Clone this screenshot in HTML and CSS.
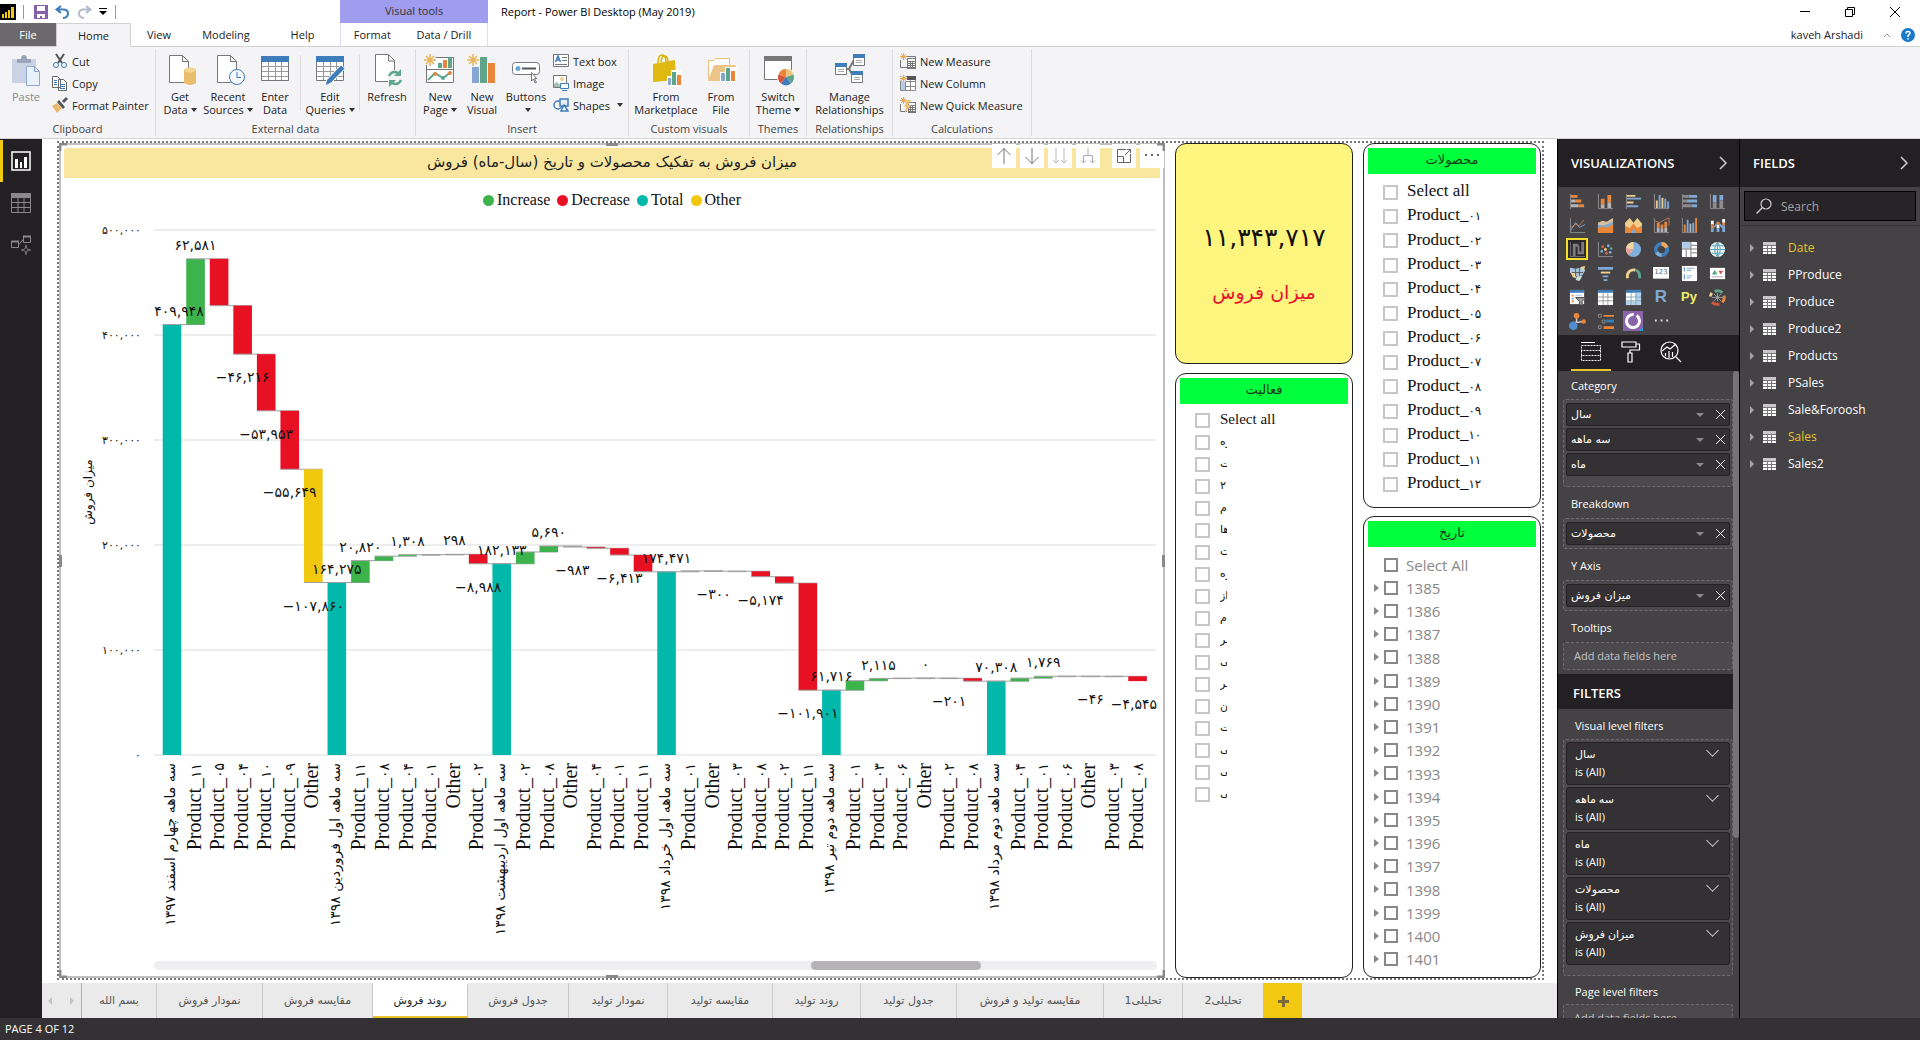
FILE: index.html
```html
<!DOCTYPE html>
<html lang="en">
<head>
<meta charset="utf-8">
<title>Report - Power BI Desktop (May 2019)</title>
<link rel="stylesheet" href="styles.css">
</head>
<body>
<header class="top">
  <div class="titlebar">
    <div class="quick">
      <svg class="logo" width="16" height="16" viewBox="0 0 16 16"><path fill="#000" d="M0 0h16v16H0z"/><path fill="#f2c811" d="M2 10h2v4H2zM5 8h2v6H5zM8 6h2v8H8zM11 3h3v11h-3z"/></svg>
      <i class="bar"></i>
      <button class="q" aria-label="Save"><svg width="14" height="14" viewBox="0 0 14 14"><path fill="#8661a8" d="M0 0h14v14H0z"/><path fill="#fff" d="M3 1h8v5H3zM3 9h8v4H8v-2H6v2H3z"/></svg></button>
      <button class="q" aria-label="Undo"><svg width="15" height="14" viewBox="0 0 15 14"><path fill="none" stroke="#3f7cba" stroke-width="2" d="M6 1 1.500 4.500 6 8M2 4.500h6q5 0 5 4t-5 4.500"/></svg></button>
      <button class="q" aria-label="Redo"><svg width="15" height="14" viewBox="0 0 15 14"><path fill="none" stroke="#b4bccb" stroke-width="2" d="M9 1l4.500 3.500L9 8M13 4.500H7q-5 0-5 4T7 13"/></svg></button>
      <button class="q" aria-label="Customize"><svg width="8" height="8" viewBox="0 0 8 8"><path d="M0 0h8v1H0zM0 3h8L4 7z"/></svg></button>
      <i class="bar"></i>
    </div>
    <div class="vtools">Visual tools</div>
    <div class="apptitle">Report - Power BI Desktop (May 2019)</div>
    <div class="winbtns">
      <button aria-label="Minimize"><svg width="12" height="12" viewBox="0 0 12 12"><path d="M1 5h10v1H1z"/></svg></button>
      <button aria-label="Restore"><svg width="12" height="12" viewBox="0 0 12 12"><path fill="none" stroke="#000" d="M1.500 3.500h7v7h-7zM3.500 3V1.500h7v7H9"/></svg></button>
      <button aria-label="Close"><svg width="12" height="12" viewBox="0 0 12 12"><path fill="none" stroke="#000" d="M1 1l10 10M11 1 1 11"/></svg></button>
    </div>
  </div>
  <nav class="menu">
    <button class="m file">File</button><button class="m home">Home</button><button class="m view">View</button><button class="m modeling">Modeling</button><button class="m help">Help</button>
    <div class="ctx"><button class="m">Format</button><button class="m">Data / Drill</button></div>
    <div class="user"><span>kaveh Arshadi</span>
      <svg width="8" height="6" viewBox="0 0 8 6"><path fill="none" stroke="#999" d="M1 5l3-3 3 3"/></svg>
      <svg width="14" height="14" viewBox="0 0 14 14"><circle cx="7" cy="7" r="7" fill="#1979ca"/><path fill="none" stroke="#fff" stroke-width="1.500" d="M5 5.500q0-2 2-2t2 1.800Q9 6.500 7 7.500V9M7 10v1.500"/></svg>
    </div>
  </nav>
  <div class="ribbon">
    <section class="g g1">
      <div class="tools">
        <button class="big dis"><svg width="32" height="32" viewBox="0 0 32 32"><path fill="#c9d3e4" d="M2 4h24v24H2z"/><path fill="#9aa5bb" d="M7 4h4q0-4 3-4t3 4h4v4H7z"/><path fill="#e9f1fb" stroke="#8fa9d4" d="M16.500 11.500h8l5 5v14h-13zM24.500 11.500v5h5"/></svg><span>Paste</span></button>
        <div class="smalls">
          <button class="sm"><svg width="16" height="16" viewBox="0 0 16 16"><path fill="none" stroke="#555" stroke-width="2" d="M4 1l6 9M12 1 6 10"/><circle cx="4" cy="12" r="2.500" fill="none" stroke="#3f7cba"/><circle cx="12" cy="12" r="2.500" fill="none" stroke="#3f7cba"/></svg>Cut</button>
          <button class="sm"><svg width="16" height="16" viewBox="0 0 16 16"><path fill="#fff" stroke="#666" d="M.5 1.500h5l3 3v8h-8zM6.500 4.500h5l3 3v8h-8z"/><path stroke="#3f7cba" d="M2 5.500h3M2 7.500h3M2 9.500h3M8 9.500h5M8 11.500h5M8 13.500h5"/></svg>Copy</button>
          <button class="sm"><svg width="16" height="16" viewBox="0 0 16 16"><path fill="#e9b96f" d="M0 9l5-3 5 5-5 5z"/><path fill="#555" d="M5 5l2-2 6 7-2 2zM10 4l4-4 2 2-4 4z"/></svg>Format Painter</button>
        </div>
      </div>
      <h2>Clipboard</h2>
    </section>
    <section class="g g2">
      <div class="tools">
        <button class="big w48"><svg width="32" height="32" viewBox="0 0 32 32"><path fill="#fff" stroke="#777" d="M5.500.5h13l6 6v21h-19zM18.500.5v6h6"/><path fill="#e9bd6b" d="M20 15q6-4 12 0v13q-6 4-12 0z"/><ellipse cx="26" cy="15" rx="6" ry="2.500" fill="#f4d490"/></svg><span>Get<br>Data<b class="dd"></b></span></button>
        <button class="big w48"><svg width="32" height="32" viewBox="0 0 32 32"><path fill="#fff" stroke="#777" d="M5.500.5h13l6 6v21h-19zM18.500.5v6h6"/><circle cx="25" cy="22" r="7.500" fill="#f4f8fd" stroke="#3f7cba"/><path fill="none" stroke="#3f7cba" d="M25 17v5.500h4"/></svg><span>Recent<br>Sources<b class="dd"></b></span></button>
        <button class="big w46"><svg width="32" height="32" viewBox="0 0 32 32"><path fill="#fff" stroke="#777" d="M2.500 2.500h27v23h-27z"/><path fill="#3f7cba" d="M2 1h28v6H2z"/><path stroke="#999" d="M3 11.500h26M3 16.500h26M3 21.500h26M9.500 7v18M16.500 7v18M22.500 7v18"/></svg><span>Enter<br>Data</span></button>
        <i class="vs"></i>
        <button class="big w54"><svg width="32" height="32" viewBox="0 0 32 32"><path fill="#fff" stroke="#777" d="M2.500 2.500h27v23h-27z"/><path fill="#3f7cba" d="M2 1h28v6H2z"/><path stroke="#999" d="M3 11.500h26M3 16.500h26M3 21.500h26M9.500 7v18M16.500 7v18M22.500 7v18"/><path fill="#3f7cba" stroke="#fff" d="M11 31l1.500-6L27 10l4 3.500L17 28z"/></svg><span>Edit<br>Queries<b class="dd"></b></span></button>
        <i class="vs"></i>
        <button class="big w50"><svg width="32" height="32" viewBox="0 0 32 32"><path fill="#fff" stroke="#777" d="M4.500-.5h13l6 6v21h-19zM17.500 0v6h6"/><circle cx="24" cy="23" r="8" fill="#f4f4f6"/><path fill="none" stroke="#5ea58c" stroke-width="2.500" d="M18 21q3-6 9-3M30 25q-3 6-9 3"/><path fill="#5ea58c" d="M30 14v7h-7zM18 32v-7h7z"/></svg><span>Refresh</span></button>
      </div>
      <h2>External data</h2>
    </section>
    <section class="g g3">
      <div class="tools">
        <button class="big w48"><svg width="32" height="32" viewBox="0 0 32 32"><path fill="#fff" stroke="#777" d="M2.500 2.500h27v25h-27zM3 14.500h26"/><path fill="#5ea58c" d="M14 8h4v5h-4zM24 2h4v11h-4z"/><path fill="#e8863a" d="M19 5h4v8h-4z"/><path fill="none" stroke="#5ea58c" stroke-width="2" d="M4 25l7-7 8 5 8-6"/><circle cx="11" cy="19" r="2" fill="#e8863a"/><circle cx="19" cy="23" r="2" fill="#5ea58c"/><circle cx="26" cy="18" r="2" fill="#e8863a"/><circle cx="6" cy="5" r="6" fill="#f4f4f6"/><path stroke="#e9b45c" stroke-width="1.500" d="M6-1v12M0 5h12M2 1l8 8M10 1 2 9"/></svg><span>New<br>Page<b class="dd"></b></span></button>
        <button class="big w36"><svg width="32" height="32" viewBox="0 0 32 32"><path fill="#85a7d2" d="M6 12h7v16H6z"/><path fill="#5ea58c" d="M14 2h7v26h-7z"/><path fill="#e8863a" d="M22 8h7v20h-7z"/><circle cx="7" cy="5" r="6" fill="#f4f4f6"/><path stroke="#e9b45c" stroke-width="1.500" d="M7-1v12M1 5h12M3 1l8 8M11 1 3 9"/></svg><span>New<br>Visual</span></button>
        <button class="big w52"><svg width="32" height="32" viewBox="0 0 32 32"><rect x="2.500" y="7.500" width="27" height="12" rx="3" fill="#fff" stroke="#777"/><circle cx="8" cy="13.500" r="2.500" fill="#69a7d6"/><path stroke="#555" stroke-width="2" d="M12 13.500h14"/><path fill="#fff" stroke="#777" d="M21.500 17.500l5 6h-2l2 4-1.500.5-1.500-4-2 2z"/></svg><span>Buttons<br><b class="dd mid"></b></span></button>
        <div class="smalls">
          <button class="sm"><svg width="16" height="16" viewBox="0 0 16 16"><path fill="#fff" stroke="#777" d="M.5 1.500h15v12H.5z"/><path fill="none" stroke="#3f7cba" stroke-width="1.500" d="M2.500 9 5 3l2.500 6M3 7h4"/><path stroke="#777" d="M9 4.500h5M9 7.500h5M2 11.500h12"/></svg>Text box</button>
          <button class="sm"><svg width="16" height="16" viewBox="0 0 16 16"><path fill="#fff" stroke="#777" d="M.5.5h13v12H.5z"/><circle cx="9" cy="4" r="2" fill="#f1cf90"/><path fill="#9fc3b0" d="M1 12V9l3-2 3 3v2z"/><path fill="#fff" stroke="#3f7cba" d="M7.500 8.500h8v5h-8zM9 15.500h5"/></svg>Image</button>
          <button class="sm"><svg width="16" height="16" viewBox="0 0 16 16"><circle cx="5" cy="8" r="4" fill="none" stroke="#3f7cba" stroke-width="1.500"/><path fill="#e6eef8" stroke="#3f7cba" stroke-width="1.500" d="M7 2h8v7H7z"/><path fill="#fff" stroke="#3f7cba" stroke-width="1.500" d="M11 8l4 6H8z"/></svg>Shapes<b class="dd"></b></button>
        </div>
      </div>
      <h2>Insert</h2>
    </section>
    <section class="g g4">
      <div class="tools">
        <button class="big w74"><svg width="32" height="32" viewBox="0 0 32 32"><path fill="none" stroke="#d9b300" stroke-width="1.500" d="M8 8q0-8 4-8t4 8M11 7q1-7 4-6t3 6"/><path fill="#dfb811" d="M3 9l22-4 1 20-23 2z"/><path fill="#fff" d="M17 21h4v-6h10v17H17z"/><path fill="#85a7d2" d="M18 23h3v7h-3z"/><path fill="#5ea58c" d="M22 17h4v13h-4z"/><path fill="#e8863a" d="M27 20h4v10h-4z"/></svg><span>From<br>Marketplace</span></button>
        <button class="big w36"><svg width="32" height="32" viewBox="0 0 32 32"><path fill="#fff" stroke="#e9bd7c" d="M3.500 24V5.500h5l2-2h14V12"/><path fill="#ecc488" d="M3 26 9 10h22l-6 16z"/><path fill="#fff" d="M15 17h5v-5h12v15H15z"/><path fill="#85a7d2" d="M16 18h4v8h-4z"/><path fill="#5ea58c" d="M21 13h4v13h-4z"/><path fill="#e8863a" d="M26 16h4v10h-4z"/></svg><span>From<br>File</span></button>
      </div>
      <h2>Custom visuals</h2>
    </section>
    <section class="g g5">
      <div class="tools">
        <button class="big w54"><svg width="32" height="32" viewBox="0 0 32 32"><path fill="#fff" stroke="#777" d="M2.500 2.500h27v22h-27z"/><path fill="#777" d="M2 1h28v5H2z"/><circle cx="24" cy="22" r="9" fill="#fff"/><path fill="#f0c27c" d="M24 22V14a8 8 0 0 1 7.500 5.500z"/><path fill="#5ea58c" d="M24 22l7.500-2.500A8 8 0 0 1 29 28.500z"/><path fill="#3f7cba" d="M24 22l5 6.500a8 8 0 0 1-10 0z"/><path fill="#d2553c" d="M24 22l-5 6.500a8 8 0 0 1-2.500-9z"/><path fill="#e8863a" d="M24 22l-7.500-2.500A8 8 0 0 1 24 14z"/></svg><span>Switch<br>Theme<b class="dd"></b></span></button>
      </div>
      <h2>Themes</h2>
    </section>
    <section class="g g6">
      <div class="tools">
        <button class="big w80"><svg width="32" height="32" viewBox="0 0 32 32"><path fill="none" stroke="#777" stroke-width="2" d="M12 14h3l5-9M12 14h3l4 7"/><path fill="#fff" stroke="#777" d="M1.500 9.500h11v10h-11zM19.500.5h11v10h-11zM17.500 17.500h11v10h-11z"/><path fill="#3f7cba" d="M1 8h12v4H1zM19-1h12v4H19zM17 16h12v4H17z"/><path stroke="#aaa" d="M4 14.500h6M4 16.500h6M22 5.500h6M22 7.500h6M20 22.500h6M20 24.500h6"/></svg><span>Manage<br>Relationships</span></button>
      </div>
      <h2>Relationships</h2>
    </section>
    <section class="g g7">
      <div class="tools">
        <div class="smalls">
          <button class="sm"><svg width="16" height="16" viewBox="0 0 16 16"><path fill="none" stroke="#777" d="M.5 7v7.500H7M6 3.500h9.500V6"/><path fill="#777" d="M7 5h9v11H7z"/><path fill="#fff" d="M8 6h7v2H8zM8 9h2v1H8zM11 9h1v1h-1zM13 9h2v1h-2zM8 11h2v1H8zM11 11h1v1h-1zM13 11h2v1h-2zM8 13h2v1H8zM11 13h1v1h-1zM13 13h2v1h-2z"/><path stroke="#e9a95c" d="M3.500 0v7M0 3.500h7M1 1l5 5M6 1 1 6"/></svg>New Measure</button>
          <button class="sm"><svg width="16" height="16" viewBox="0 0 16 16"><path fill="#fff" stroke="#888" d="M.5 1.500h15v14H.5zM0 6.500h16M0 11.500h16M5.500 2v14M10.500 2v14"/><path fill="#555" d="M6 1h10v4H6z"/><path fill="#b7cbe5" d="M1 7h4v8H1z"/><circle cx="3.500" cy="3.500" r="3.500" fill="#f4f4f6"/><path stroke="#e9a95c" d="M3.500 0v7M0 3.500h7M1 1l5 5M6 1 1 6"/></svg>New Column</button>
          <button class="sm"><svg width="16" height="16" viewBox="0 0 16 16"><path fill="none" stroke="#777" d="M.5 7v7.500H7"/><path fill="#777" d="M8 5h8v11H8z"/><path fill="#fff" d="M9 6h6v2H9zM9 9h1v1H9zM11 9h1v1h-1zM13 9h2v1h-2zM9 11h1v1H9zM11 11h1v1h-1zM13 11h2v1h-2zM9 13h1v1H9zM11 13h1v1h-1zM13 13h2v1h-2z"/><path fill="#efc27a" d="M7 3h4L8 8h3l-6 8 1-6H4z"/><path stroke="#e9a95c" d="M3.500 0v7M0 3.500h7M1 1l5 5M6 1 1 6"/></svg>New Quick Measure</button>
        </div>
      </div>
      <h2>Calculations</h2>
    </section>
  </div>
</header>

<div class="work">
  <nav class="rail">
    <button class="on" aria-label="Report"><svg width="20" height="20" viewBox="0 0 20 20"><path fill="none" stroke="#fff" stroke-width="1.500" d="M1 1h18v18H1z"/><path fill="#fff" d="M4 8h3v9H4zM9 11h2v6H9zM13 6h3v11h-3z"/></svg></button>
    <button aria-label="Data"><svg width="20" height="20" viewBox="0 0 20 20"><path fill="none" stroke="#8a888a" d="M.5.5h19v19H.5zM0 9.500h20M0 14.500h20M7 5v15M13 5v15"/><path fill="#8a888a" d="M0 0h20v5H0z"/></svg></button>
    <button aria-label="Model"><svg width="20" height="20" viewBox="0 0 20 20"><path fill="none" stroke="#8a888a" d="M.5 6.500h7v6h-7zM12.500 1.500h7v6h-7zM8 9.500l4-5M15 10q0 5 4.500 5-4.500 0-4.500 4.500 0-4.500-4.500-4.500 4.500 0 4.500-5"/><path stroke="#8a888a" stroke-width="2" d="M0 6.500h8M12 1.500h8"/></svg></button>
  </nav>

  <main class="stage">
    <div class="canvas">
      <section class="visual chart">
        <h1 dir="rtl">میزان فروش به تفکیک محصولات و تاریخ (سال-ماه) فروش</h1>
        <div class="vhead">
          <button aria-label="Drill up"><svg width="16" height="18" viewBox="0 0 16 18"><path fill="none" stroke="#777" d="M8 17V1M1.500 8 8 1.500 14.500 8"/></svg></button>
          <button aria-label="Drill down"><svg width="16" height="18" viewBox="0 0 16 18"><path fill="none" stroke="#777" d="M8 1v16M1.500 10 8 16.500l6.500-6.500"/></svg></button>
          <button aria-label="Next level"><svg width="16" height="18" viewBox="0 0 16 18"><path fill="none" stroke="#bbb" d="M4 1v15M1 13l3 3 3-3M12 1v15M9 13l3 3 3-3"/></svg></button>
          <button class="gap" aria-label="Expand all"><svg width="16" height="18" viewBox="0 0 16 18"><path fill="none" stroke="#aaa" d="M8 1v7M3.500 16V8.500h9V16M1 13.500 3.500 16 6 13.500M10 13.500l2.500 2.500 2.500-2.500"/></svg></button>
          <button aria-label="Focus mode"><svg width="16" height="16" viewBox="0 0 16 16"><path fill="none" stroke="#666" d="M10 1.500H1.500v13h13V6M1.500 8.500h6v6M9 7l5.500-5.500M11 1.500h3.500V5"/></svg></button>
          <button aria-label="More options"><svg width="16" height="16" viewBox="0 0 16 16"><path fill="#666" d="M1 6h2v2H1zM7 6h2v2H7zM13 6h2v2h-2z"/></svg></button>
        </div>
        <ul class="legend"><li class="inc">Increase</li><li class="dec">Decrease</li><li class="tot">Total</li><li class="oth">Other</li></ul>
        <svg class="plot" id="plot" viewBox="64 218 1096 743" preserveAspectRatio="xMinYMin meet"></svg>
        <div class="hscroll"><i></i></div>
        <b class="h tl"></b><b class="h tr"></b><b class="h bl"></b><b class="h br"></b><b class="h tm"></b><b class="h bm"></b><b class="h lm"></b><b class="h rm"></b>
      </section>
      <div class="col">
        <section class="visual kpi"><strong>۱۱,۳۴۳,۷۱۷</strong><span>میزان فروش</span></section>
        <section class="visual slicer act"><h2>فعالیت</h2><div class="list" id="act"></div></section>
      </div>
      <div class="col">
        <section class="visual slicer prod"><h2>محصولات</h2><div class="list" id="prod"></div></section>
        <section class="visual slicer date"><h2>تاریخ</h2><div class="list" id="date"></div></section>
      </div>
    </div>
    <nav class="pages">
      <div class="arrows"><button aria-label="Previous"><svg width="6" height="8" viewBox="0 0 6 8"><path fill="#c4c4c4" d="M5 0v8L1 4z"/></svg></button><button aria-label="Next"><svg width="6" height="8" viewBox="0 0 6 8"><path fill="#c4c4c4" d="M1 0v8l4-4z"/></svg></button></div>
      <button class="p" style="width:76px">بسم الله</button><button class="p" style="width:106px">نمودار فروش</button><button class="p" style="width:110px">مقایسه فروش</button><button class="p cur" style="width:95px">روند فروش</button><button class="p" style="width:101px">جدول فروش</button><button class="p" style="width:99px">نمودار تولید</button><button class="p" style="width:105px">مقایسه تولید</button><button class="p" style="width:88px">روند تولید</button><button class="p" style="width:96px">جدول تولید</button><button class="p" style="width:147px">مقایسه تولید و فروش</button><button class="p" style="width:79px">تحلیلی1</button><button class="p last" style="width:80px">تحلیلی2</button><button class="add" aria-label="New page"><svg width="12" height="12" viewBox="0 0 12 12"><path fill="#7a6a3a" d="M5 1h3v4h4v3H8v4H5V8H1V5h4z"/></svg></button>
    </nav>
  </main>

  <aside class="viz">
    <header><h2>VISUALIZATIONS</h2><svg width="8" height="14" viewBox="0 0 8 14"><path fill="none" stroke="#ccc" stroke-width="1.500" d="M1 1l6 6-6 6"/></svg></header>
    <div class="grid" id="grid">
      <button aria-label="Stacked bar"><svg viewBox="0 0 18 18"><path stroke="#8d8b8d" d="M1.500 1v16"/><path fill="#e8863a" d="M2 2h7v3H2zM7 7h6v3H7zM10 12h6v3h-6z"/><path fill="#b5b3b5" d="M2 7h5v3H2zM2 12h8v3H2z"/></svg></button>
      <button aria-label="Stacked column"><svg viewBox="0 0 18 18"><path fill="none" stroke="#8d8b8d" d="M1.500 1v15.500H17"/><path fill="#e8863a" d="M4 6h4v6H4zM11 2h4v8h-4z"/><path fill="#b5b3b5" d="M4 12h4v4H4zM11 10h4v6h-4z"/></svg></button>
      <button aria-label="Clustered bar"><svg viewBox="0 0 18 18"><path stroke="#8d8b8d" d="M1.500 1v16"/><path fill="#f0cf8e" d="M2 2h9v2H2zM2 9h7v2H2z"/><path fill="#7fa8d4" d="M2 5h15v2H2zM2 13h12v2H2z"/></svg></button>
      <button aria-label="Clustered column"><svg viewBox="0 0 18 18"><path fill="none" stroke="#8d8b8d" d="M1.500 1v15.500H17"/><path fill="#f0cf8e" d="M3 8h2v8H3zM9 5h2v11H9z"/><path fill="#7fa8d4" d="M6 2h2v14H6zM12 6h2v10h-2zM15 9h2v7h-2z"/></svg></button>
      <button aria-label="100% bar"><svg viewBox="0 0 18 18"><path stroke="#8d8b8d" d="M1.500 1v16"/><path fill="#7fa8d4" d="M8 2h9v3H8zM6 7h11v3H6zM11 12h6v3h-6z"/><path fill="#8d8b8d" d="M2 2h6v3H2zM2 7h4v3H2zM2 12h9v3H2z"/></svg></button>
      <button aria-label="100% column"><svg viewBox="0 0 18 18"><path fill="none" stroke="#8d8b8d" d="M1.500 1v15.500H17"/><path fill="#7fa8d4" d="M4 2h4v8H4zM11 2h4v6h-4z"/><path fill="#8d8b8d" d="M4 10h4v6H4zM11 8h4v8h-4z"/></svg></button>
      <button aria-label="Line"><svg viewBox="0 0 18 18"><path fill="none" stroke="#8d8b8d" d="M1.500 1v15.500H17"/><path fill="none" stroke="#7fa8d4" d="M2 14l5-8 4 5 6-3"/><path fill="none" stroke="#c4785c" d="M2 11l5-3 4 1 5-6"/></svg></button>
      <button aria-label="Area"><svg viewBox="0 0 18 18"><path fill="#d9bfa0" d="M1 6l5-2 4 1 7-4v12H1z"/><path fill="#7fa8d4" d="M1 8l5 1 4-1 7-3v11H1z"/><path fill="#e8863a" d="M1 12l5-2 4 1 7-3v9H1z"/></svg></button>
      <button aria-label="Stacked area"><svg viewBox="0 0 18 18"><path fill="#f0cf8e" d="M0 6l5-5 4 5 4-5 5 6v10H0z"/><path fill="#e8863a" d="M0 9l5 3 4-5 4 5 5-3v8H0z"/><path fill="#7fa8d4" d="M6 17l3-5 3 5z"/></svg></button>
      <button aria-label="Line and stacked column"><svg viewBox="0 0 18 18"><path fill="none" stroke="#8d8b8d" d="M1.500 1v15.500H17"/><path fill="#e8863a" d="M4 6h3v5H4zM8 8h3v4H8zM12 5h3v6h-3z"/><path fill="#b5b3b5" d="M4 11h3v5H4zM8 12h3v4H8zM12 11h3v5h-3z"/><path fill="none" stroke="#c4785c" d="M2 4l5 2 5-3 5-2v8"/></svg></button>
      <button aria-label="Line and clustered column"><svg viewBox="0 0 18 18"><path fill="none" stroke="#8d8b8d" d="M1.500 1v15.500H17"/><path fill="#e8863a" d="M3 8h2v8H3zM15 1h2v15h-2z"/><path fill="#7fa8d4" d="M6 3h2v13H6zM12 6h2v10h-2z"/><path fill="#b5b3b5" d="M9 7h2v9H9z"/></svg></button>
      <button aria-label="Ribbon"><svg viewBox="0 0 18 18"><path fill="#fff" d="M2 4h3v4H2zM8 8h3v4H8zM14 2h3v4h-3z"/><path fill="#e8863a" d="M2 8h3v4H2zM8 5h3v3H8zM14 6h3v3h-3z"/><path fill="#7fa8d4" d="M2 12h3v4H2zM8 12h3v4H8zM14 9h3v7h-3zM5 10l3-4v3l-3 3zM11 6l3 3v3l-3-3z"/></svg></button>
      <button class="sel" aria-label="Waterfall"><svg viewBox="0 0 18 18"><path fill="#6d6b6d" d="M1 1h1v15h15v1H1z"/><path fill="#7d7b7d" d="M4 3h3v13H4zM7 3h3v3H7zM9 5h2v9H9zM11 11h3v3h-3zM13 1h3v13h-3z"/></svg></button>
      <button aria-label="Scatter"><svg viewBox="0 0 18 18"><path fill="none" stroke="#8d8b8d" d="M1.500 1v15.500H17"/><g fill="#7fa8d4"><circle cx="5" cy="11" r="1.500"/><circle cx="12" cy="5" r="1.500"/><circle cx="14" cy="12" r="1.500"/></g><g fill="#d2654c"><circle cx="6" cy="6" r="1.500"/><circle cx="10" cy="13" r="1.500"/></g><circle cx="9" cy="9" r="1.500" fill="#f0cf8e"/><circle cx="15" cy="8" r="1.500" fill="#5ea58c"/></svg></button>
      <button aria-label="Pie"><svg viewBox="0 0 18 18"><circle cx="9" cy="9" r="8" fill="#7fb0dc"/><path fill="#f6d59c" d="M9 9V1a8 8 0 0 0-8 7z"/><path fill="#e8a49a" d="M9 9 1 8a8 8 0 0 0 3 7z"/></svg></button>
      <button aria-label="Donut"><svg viewBox="0 0 18 18"><circle cx="9" cy="9" r="6" fill="none" stroke="#3f7cba" stroke-width="4"/><path fill="none" stroke="#f0a860" stroke-width="4" d="M9 3a6 6 0 0 1 5.500 4"/><path fill="none" stroke="#7fb0dc" stroke-width="4" d="M9 15a6 6 0 0 1-5-3"/></svg></button>
      <button aria-label="Treemap"><svg viewBox="0 0 18 18"><path fill="#fff" d="M1 1h16v16H1z"/><path fill="#b3cbe6" d="M1 1h9v7H1z"/><path stroke="#777" fill="none" d="M1 8.500h16M10.500 1v16M11 4.500h6M5.500 9v8M11 12.500h6"/></svg></button>
      <button aria-label="Map"><svg viewBox="0 0 18 18"><circle cx="9" cy="9" r="8" fill="#e6f3f1"/><path fill="none" stroke="#5aa0b8" d="M1 9h16M9 1v16M3 5h12M3 13h12M9 1Q3 9 9 17M9 1q6 8 0 16"/></svg></button>
      <button aria-label="Filled map"><svg viewBox="0 0 18 18"><path fill="#a9c7dd" d="M1 3l6 1 8-2 2 4-3 5-5 1-5-1-3-3z"/><path fill="#f0cf8e" d="M2 8l5 1 1 5-4-1zM12 2l5-1-1 5z"/><path fill="#c6dfe0" d="M9 11l5 1-3 5-4-1z"/><path stroke="#555" fill="none" d="M7 4v8M3 8h12M11 3v9"/></svg></button>
      <button aria-label="Funnel"><svg viewBox="0 0 18 18"><path fill="#7fa8d4" d="M1 2h16v3H1zM6 11h6v2H6z"/><path fill="#f0cf8e" d="M4 7h10v2H4z"/><path fill="#7fa8d4" d="M7 15h4v2H7z"/></svg></button>
      <button aria-label="Gauge"><svg viewBox="0 0 18 18"><path fill="none" stroke="#f0cf8e" stroke-width="3" d="M2.500 14V12A6.500 6.500 0 0 1 11 5.500"/><path fill="none" stroke="#5ea58c" stroke-width="3" d="M11.500 5.500A6.500 6.500 0 0 1 15.500 12v2"/></svg></button>
      <button class="card" aria-label="Card"><span>123</span></button>
      <button aria-label="Multi-row card"><svg viewBox="0 0 18 18"><path fill="#fff" d="M1 1h16v16H1z"/><path fill="#3f7cba" d="M3 2h1v5H3zM3 10h1v5H3z"/><path fill="#7fa8d4" d="M6 3h8v1H6zM6 5h5v1H6zM6 11h6v1H6zM6 13h4v1H6z"/></svg></button>
      <button aria-label="KPI"><svg viewBox="0 0 18 18"><path fill="#fff" d="M1 3h16v12H1z"/><path fill="#5ea58c" d="M3 10l3-5 3 5z"/><path fill="#d2553c" d="M10 6h5l-2.500 4z"/><path stroke="#aaa" d="M3 12.500h12"/></svg></button>
      <button aria-label="Slicer"><svg viewBox="0 0 18 18"><path fill="#fff" d="M1 1h15v15H1z"/><path fill="#3f7cba" d="M1 1h15v3H1z"/><path fill="#e8863a" d="M3 6h2v2H3zM3 12h2v2H3z"/><path fill="#7fb0dc" d="M3 9h2v2H3zM7 6h7v1H7z"/><path fill="#999" stroke="#444" d="M7 9h11l-4 4v5l-3-2v-3z"/></svg></button>
      <button aria-label="Table"><svg viewBox="0 0 18 18"><path fill="#fff" d="M1 1h16v16H1z"/><path fill="#3f7cba" d="M1 1h16v3H1z"/><path stroke="#999" d="M1 8.500h16M1 12.500h16M6.500 4v13M11.500 4v13"/></svg></button>
      <button aria-label="Matrix"><svg viewBox="0 0 18 18"><path fill="#fff" d="M1 1h16v16H1z"/><path fill="#3f7cba" d="M1 1h16v3H1z"/><path fill="#b3d3ec" d="M11 4h6v13h-6zM1 13h16v4H1z"/><path stroke="#8ab" d="M1 8.500h16M1 12.500h16M6.500 4v13M11.500 4v13"/></svg></button>
      <button class="r" aria-label="R visual">R</button>
      <button class="py" aria-label="Python visual">Py</button>
      <button aria-label="Key influencers"><svg viewBox="0 0 18 18"><g fill="none" stroke-width="3"><path stroke="#5ea58c" d="M6 2.500q5-2 8 1.500"/><path stroke="#e8863a" d="M16 7q1 4-2 7"/><path stroke="#d2553c" d="M11 16q-5 1-8-2"/><path stroke="#f0cf8e" d="M1.500 8q0-2 1.500-4"/></g><path stroke="#999" d="M5 5l8 8M13 5l-8 8M3 9h12M9 4v9"/></svg></button>
      <button aria-label="Network"><svg viewBox="0 0 18 18"><path stroke="#ccc" stroke-width="1.500" fill="none" d="M8 3v6l-4 4M8 10l7-1"/><circle cx="8" cy="3" r="3" fill="#e8863a"/><circle cx="15.500" cy="9" r="2.500" fill="#e8863a"/><circle cx="4.500" cy="13.500" r="4.500" fill="#4f8fd0"/></svg></button>
      <button aria-label="Hierarchy slicer"><svg viewBox="0 0 18 18"><path fill="none" stroke="#8d8b8d" d="M1.500 1.500h3v3h-3zM5.500 7.500h3v3h-3zM1.500 13.500h3v3h-3z"/><path fill="#e8863a" d="M7 2h11v2H7zM7 14h11v3H7z"/><path fill="#2d86c4" d="M10 7h8v3h-8z"/></svg></button>
      <button aria-label="Custom donut"><svg class="pur" viewBox="0 0 20 20"><path fill="#8a63a8" d="M0 0h20v20H0z"/><circle cx="10" cy="10" r="6.500" fill="none" stroke="#fff" stroke-width="3" stroke-dasharray="36 3" transform="rotate(-50 10 10)"/><path fill="#1ba1e2" d="M20 16v4h-4z"/></svg></button>
      <button aria-label="More visuals"><svg viewBox="0 0 18 18"><path fill="#ddd" d="M2 7h2v2H2zM8 7h2v2H8zM14 7h2v2h-2z"/></svg></button>
    </div>
    <div class="ptabs">
      <button class="on" aria-label="Fields"><svg width="22" height="22" viewBox="0 0 22 22"><path stroke="#fff" d="M1 1.500h14"/><path fill="none" stroke="#fff" stroke-dasharray="2 1" d="M1.500 4.500h19v5h-19zM1.500 9.500v5h19v-5M1.500 14.500v5h19v-5"/></svg></button>
      <button aria-label="Format"><svg width="20" height="22" viewBox="0 0 20 22"><path fill="none" stroke="#fff" stroke-width="1.200" d="M1 1h14v5H1zM15 3h3.500v6H9v3M7 12h4v9H7z"/></svg></button>
      <button aria-label="Analytics"><svg width="22" height="22" viewBox="0 0 22 22"><circle cx="9.500" cy="9.500" r="8.500" fill="none" stroke="#fff" stroke-width="1.200"/><path stroke="#fff" stroke-width="1.200" fill="none" d="M16 16l5 5M5.500 12v3M9 10v7M12.500 11v5M2 10l5-4 3 2 6-5"/></svg></button>
    </div>
    <div class="wells">
      <div class="thumb"></div>
      <h3>Category</h3>
      <div class="box cat"><div class="pill"><span>سال</span><i></i><button aria-label="Remove"></button></div><div class="pill"><span>سه ماهه</span><i></i><button aria-label="Remove"></button></div><div class="pill"><span>ماه</span><i></i><button aria-label="Remove"></button></div></div>
      <h3>Breakdown</h3>
      <div class="box"><div class="pill"><span>محصولات</span><i></i><button aria-label="Remove"></button></div></div>
      <h3>Y Axis</h3>
      <div class="box"><div class="pill"><span>میزان فروش</span><i></i><button aria-label="Remove"></button></div></div>
      <h3>Tooltips</h3>
      <div class="box ph">Add data fields here</div>
      <h2 class="fhead">FILTERS</h2>
      <h3 class="fl">Visual level filters</h3>
      <div class="box filters" id="filters">
        <div class="fc"><span>سال</span><span>is (All)</span></div>
        <div class="fc"><span>سه ماهه</span><span>is (All)</span></div>
        <div class="fc"><span>ماه</span><span>is (All)</span></div>
        <div class="fc"><span>محصولات</span><span>is (All)</span></div>
        <div class="fc"><span>میزان فروش</span><span>is (All)</span></div>
      </div>
      <h3 class="fl">Page level filters</h3>
      <div class="box ph">Add data fields here</div>
    </div>
  </aside>

  <aside class="fields">
    <header><h2>FIELDS</h2><svg width="8" height="14" viewBox="0 0 8 14"><path fill="none" stroke="#ccc" stroke-width="1.500" d="M1 1l6 6-6 6"/></svg></header>
    <label class="search"><svg width="16" height="16" viewBox="0 0 16 16"><circle cx="10" cy="6" r="5" fill="none" stroke="#ccc" stroke-width="1.200"/><path stroke="#ccc" stroke-width="1.500" d="M6.500 9.500l-6 6"/></svg><input type="text" placeholder="Search" aria-label="Search"></label>
    <ul id="fieldlist"></ul>
  </aside>
</div>
<footer class="status">PAGE 4 OF 12</footer>
<script src="app.js"></script>
</body>
</html>
```
FILE: styles.css
```css
* { box-sizing: border-box; }
html, body { height: 100%; }
body { margin: 0; display: flex; flex-direction: column; overflow: hidden; background: #fff; color: #222; font: 11px/13px "Open Sans", "DejaVu Sans", sans-serif; }
button { font: inherit; color: inherit; background: none; border: 0; padding: 0; margin: 0; }
h1, h2, h3, ul { margin: 0; padding: 0; font-weight: 400; font-size: inherit; list-style: none; }
svg { display: block; overflow: visible; flex: none; }

.titlebar { height: 23px; display: flex; align-items: center; font-size: 11px; }
.quick { width: 340px; display: flex; align-items: center; gap: 7px; }
.quick .bar { width: 1px; height: 14px; background: #999; }
.quick .bar + .q { margin-left: 3px; }
.quick .q + .bar { margin-left: 1px; }
.vtools { width: 148px; height: 23px; background: #a09cee; display: grid; place-items: center; color: #333; padding-bottom: 2px; }
.apptitle { padding-left: 13px; color: #000; }
.winbtns { margin-left: auto; display: flex; gap: 33px; padding-right: 19px; }
.menu { height: 24px; display: flex; border-bottom: 1px solid #d2d0d2; }
.m { height: 23px; }
.m.file { width: 56px; background: #6b696b; color: #fff; }
.m.home { width: 75px; height: 24px; background: #f4f4f6; border: 1px solid #d2d0d2; border-bottom: 0; }
.m.view { width: 56px; } .m.modeling { width: 78px; } .m.help { width: 75px; }
.ctx { width: 148px; border: solid #dcdcf4; border-width: 0 1px; display: flex; padding-right: 3px; }
.ctx .m { flex: 1 0 auto; }
.user { margin-left: auto; display: flex; align-items: center; gap: 20px; padding-right: 5px; }
.user svg + svg { margin-left: -10px; }

.ribbon { height: 92px; background: #f4f4f6; border-bottom: 1px solid #d2d0d2; display: flex; color: #222; }
.g { display: flex; flex-direction: column; border-right: 1px solid #dddbdd; margin: 2px 0; padding-top: 6px; }
.g h2 { text-align: center; color: #444; margin-top: auto; padding-bottom: 1px; }
.tools { display: flex; }
.g1 { width: 156px; } .g2 { width: 260px; } .g3 { width: 213px; } .g4 { width: 121px; } .g5 { width: 57px; } .g6 { width: 86px; } .g7 { width: 139px; }
.g5 .tools, .g6 .tools { justify-content: center; }
.big { display: flex; flex-direction: column; align-items: center; gap: 3px; width: 52px; white-space: nowrap; text-align: center; }
.big.dis { color: #8a888a; }
.w36 { width: 36px; } .w46 { width: 46px; } .w48 { width: 48px; } .w50 { width: 50px; } .w52 { width: 52px; } .w54 { width: 54px; } .w74 { width: 74px; } .w80 { width: 80px; }
.dd { display: inline-block; border: 3px solid transparent; border-top: 4px solid #333; border-bottom: 0; margin-left: 3px; vertical-align: 2px; }
.vs { width: 1px; height: 56px; background: #dddbdd; margin: 0 2px; }
.smalls { display: flex; flex-direction: column; gap: 6px; margin-top: -2px; }
.sm { display: flex; align-items: center; gap: 4px; height: 16px; white-space: nowrap; }
.g3 .smalls { padding-left: 1px; }
.g7 .smalls { padding-left: 7px; }

.work { flex: 1; min-height: 0; display: flex; }
.rail { width: 42px; background: #222022; flex: none; padding-top: 1px; }
.rail button { width: 42px; height: 42px; display: grid; place-items: center; }
.rail .on { box-shadow: inset 3px 0 #f2c811; }
.stage { flex: 1; min-width: 0; display: flex; flex-direction: column; }
.canvas { flex: 1; min-height: 0; margin: 2px 13px 3px 15px; border: 2px dotted #777; display: flex; gap: 10px; }
.visual { position: relative; background: #fff; border: 1px solid #222; border-radius: 11px; }
.chart { flex: 1; min-width: 0; border: 2px solid #c0bec0; border-radius: 0; display: flex; flex-direction: column; padding: 3px 3px 6px; }
.chart h1 { background: #f9e79f; height: 30px; flex: none; text-align: center; font: 15px/28px "DejaVu Sans", sans-serif; color: #222; border-radius: 3px 0 0 0; }
.vhead { position: absolute; top: -1px; right: -1px; display: flex; gap: 4px; }
.vhead button { width: 24px; height: 24px; background: #fff; display: grid; place-items: center; }
.vhead .gap { margin-right: 8px; }
.legend { display: flex; justify-content: center; gap: 7px; padding-top: 13px; height: 40px; font: 16px/18px "Liberation Serif", serif; color: #111; flex: none; }
.legend li { display: flex; gap: 3px; align-items: center; height: 18px; }
.legend li::before { content: ""; width: 11px; height: 11px; border-radius: 50%; background: #3cb44b; }
.legend .dec::before { background: #e81123; } .legend .tot::before { background: #01b8aa; } .legend .oth::before { background: #f2c80f; }
.plot { width: 100%; flex: 1 1 0; min-height: 0; }
.plot text { fill: #111; }
.t-lab { font: 14px "DejaVu Sans", sans-serif; text-anchor: middle; }
.t-title { font: 12px "DejaVu Sans", sans-serif; text-anchor: middle; }
.t-y { font: 11px "DejaVu Sans", sans-serif; text-anchor: end; }
.t-x { font: 20px "Liberation Serif", "DejaVu Sans", serif; text-anchor: end; }
.t-p { font: 14px "DejaVu Sans", sans-serif; text-anchor: end; }
.t-d { font-size: 14px; font-family: "DejaVu Sans", sans-serif; }
.hscroll { height: 9px; flex: none; margin: 0 3px 0 90px; border-radius: 5px; background: #efeef0; }
.hscroll i { display: block; width: 17%; height: 9px; margin-left: 65.5%; border-radius: 5px; background: #b5b3b5; }
.h { position: absolute; background: #8a888a; }
.tl, .tr, .bl, .br { width: 8px; height: 8px; clip-path: polygon(0 0, 100% 0, 100% 30%, 30% 30%, 30% 100%, 0 100%); }
.tl { left: -2px; top: -2px; } .tr { right: -2px; top: -2px; transform: rotate(90deg); } .bl { left: -2px; bottom: -2px; transform: rotate(-90deg); } .br { right: -2px; bottom: -2px; transform: rotate(180deg); }
.tm, .bm { width: 12px; height: 3px; left: calc(50% - 6px); } .tm { top: -2px; } .bm { bottom: -2px; }
.lm, .rm { width: 3px; height: 12px; top: calc(50% - 6px); } .lm { left: -2px; } .rm { right: -2px; }

.col { width: 178px; flex: none; display: flex; flex-direction: column; gap: 9px; }
.col:last-child { gap: 8px; margin-right: 1px; }
.kpi { height: 221px; background: #fef57f; display: flex; flex-direction: column; align-items: center; justify-content: center; gap: 26px; padding-top: 22px; }
.kpi strong { font: 25px/28px "DejaVu Sans", sans-serif; color: #111; }
.kpi span { font: 19px/28px "DejaVu Sans", sans-serif; color: #e8112d; }
.slicer { overflow: hidden; padding: 4px; }
.slicer h2 { height: 26px; background: #00ff3c; text-align: center; font: 13px/24px "DejaVu Sans", sans-serif; color: #143c1c; }
.act { flex: 1; } .prod { height: 365px; } .date { flex: 1; }
.row { display: flex; align-items: center; }
.row input { appearance: none; margin: 0; width: 15px; height: 15px; border: 2px solid #c8c6c8; flex: none; }
.row label { white-space: nowrap; }
.act .row { height: 22px; padding-left: 15px; gap: 10px; font: 15px/18px "Liberation Serif", serif; color: #111; }
.act .list { padding-top: 5px; }
.act .row:first-child label { padding-bottom: 3px; }
.act label.cut { width: 7px; overflow: hidden; font: 11px/20px "DejaVu Sans", sans-serif; }
.prod .list { padding: 6px 0 0; }
.prod .row { height: 24px; padding-left: 15px; gap: 9px; font: 17px/20px "Liberation Serif", serif; color: #111; }
.prod .row label { padding-bottom: 2px; }
.prod .row:nth-child(3n) { height: 25px; }
.prod .row span { font: 12px "DejaVu Sans", sans-serif; }
.date .list { padding: 6px 0 0; display: flex; flex-direction: column; }
.date .row { height: 23px; padding-left: 6px; font: 15px/23px "Open Sans", sans-serif; color: #888; }
.date .row:nth-child(5n) { height: 24px; }
.date .row i { width: 10px; height: 8px; }
.date .row.exp i::before { content: ""; display: block; width: 0; border: 4px solid transparent; border-left: 5px solid #888; border-right: 0; }
.date .row input { width: 14px; height: 14px; border-color: #888; }
.date .row label { padding: 2px 0 0 8px; }

.pages { height: 35px; flex: none; background: #eaeaea; display: flex; }
.arrows { width: 39px; display: flex; align-items: center; justify-content: space-between; padding: 0 6px 0 5px; }
.arrows + .p { border-left: 1px solid #b0aeb0; }
.p { border-right: 1px solid #c8c6c8; font: 11px/16px "DejaVu Sans", sans-serif; color: #555; white-space: nowrap; flex: none; }
.p.cur { background: #fff; border-bottom: 2px solid #e8c52c; border-top: 2px solid #fff; color: #222; }
.p.last { border-right: 0; }
.add { width: 39px; background: #f2c811; display: grid; place-items: center; }

.viz { width: 183px; flex: none; background: #444244; color: #fff; display: flex; flex-direction: column; border-left: 1px solid #000; border-right: 1px solid #000; }
.viz header, .fields header { height: 48px; flex: none; background: #222022; display: flex; align-items: center; justify-content: space-between; padding: 0 12px 0 13px; font-weight: 600; font-size: 13px; color: #fff; }
.viz header h2, .fields header h2, .fhead { font-weight: 600; }
.grid { display: grid; grid-template-columns: repeat(6, 28px); grid-auto-rows: 24px; padding: 2px 0 2px 5px; height: 148px; flex: none; }
.grid button { display: grid; place-items: center; }
.grid svg { width: 17px; height: 17px; }
.grid svg.pur { width: 20px; height: 20px; }
.grid .sel { border: 2px solid #f2dd2c; background: #2a282a; margin: 1px 3px; }
.card span { background: #fff; color: #4a6c8c; font: 7px/11px "DejaVu Sans", sans-serif; width: 16px; border-bottom: 1px solid #bbb; }
.r { font: bold 17px/20px "Liberation Sans", sans-serif; color: #7fa8d4; }
.py { font: bold 13px/20px "Liberation Sans", sans-serif; color: #f5ee6a; }
.ptabs { height: 36px; flex: none; background: #222022; display: flex; padding-left: 13px; }
.ptabs button { width: 40px; display: grid; place-items: center; border-bottom: 2px solid transparent; }
.ptabs .on { border-color: #e8c52c; }
.wells { position: relative; flex: 1; min-height: 0; overflow: hidden; }
.thumb { position: absolute; right: 0; top: 0; width: 6px; height: 467px; background: #757375; border-radius: 3px; }
.wells h3 { height: 28px; padding-left: 13px; line-height: 29px; }
.box { width: 170px; margin: 0 0 5px 5px; border: 1px dashed #6d6b6d; border-radius: 3px; padding: 3px 2px; background: #4b494b; display: flex; flex-direction: column; gap: 2px; min-height: 31px; }
.box + h3 { height: 26px; line-height: 24px; }
.box.cat { height: 88px; }
.box.ph { padding: 0 10px; min-height: 28px; line-height: 26px; color: #c4c2c4; margin-bottom: 4px; }
.pill { height: 23px; background: #333133; border: 1px solid #222; border-radius: 2px; display: flex; align-items: center; padding: 0 4px; }
.pill span { flex: 1; font: 11px/18px "DejaVu Sans", sans-serif; }
.pill i { border: 4px solid transparent; border-top: 4px solid #8a888a; border-bottom: 0; margin-right: 12px; }
.pill button { width: 9px; height: 9px; background: linear-gradient(45deg, transparent 45%, #fff 45%, #fff 55%, transparent 55%), linear-gradient(-45deg, transparent 45%, #fff 45%, #fff 55%, transparent 55%); }
.fhead { height: 35px; background: #222022; font-size: 13px; line-height: 39px; padding-left: 15px; margin-right: 6px; }
.wells h3.fl { padding-left: 17px; height: 30px; line-height: 34px; }
.filters { height: 237px; margin-bottom: 0; padding-top: 2px; }
.filters + h3.fl { height: 28px; line-height: 31px; }
.fc { height: 43px; flex: none; background: #333133; border: 1px solid #222; border-radius: 3px; padding: 2px 8px; display: flex; flex-direction: column; position: relative; }
.fc span { line-height: 18px; }
.fc::after { content: ""; position: absolute; right: 12px; top: 3px; width: 8px; height: 8px; border: solid #ccc; border-width: 0 1px 1px 0; transform: rotate(45deg); }

.fields { width: 180px; flex: none; background: #444244; color: #fff; }
.search { display: flex; align-items: center; gap: 9px; height: 30px; margin: 4px; padding-left: 11px; border: 1px solid #000; background: #262426; }
.search input { background: none; border: 0; outline: 0; width: 100px; font: 12px "Open Sans", sans-serif; color: #fff; padding: 0; }
.search input::placeholder { color: #a5a3a5; opacity: 1; }
.fields ul { border-top: 1px solid #373537; padding-top: 8px; font-size: 12px; }
.fields li { height: 27px; display: flex; align-items: center; padding-left: 10px; }
.fields li::before { content: ""; border: 4px solid transparent; border-left: 4px solid #a5a3a5; border-right: 0; margin-right: 9px; }
.fields li svg { margin-right: 12px; }
.fields li.y { color: #e8c52c; }

.status { height: 22px; flex: none; background: #333133; color: #fff; padding-left: 5px; line-height: 21px; }
```
FILE: app.js
```js
const fa = n => String(n).replace(/\B(?=(\d{3})+$)/g, ',').replace(/\d/g, d => '۰۱۲۳۴۵۶۷۸۹'[d]);

// [label, kind, value, show value]
const rows = [
  ['سه ماهه چهارم اسفند ۱۳۹۷', 't', 409948, 1], ['11', 'v', 62581, 1], ['05', 'v', -44576], ['04', 'v', -46216, 1], ['10', 'v', -53953, 1], ['09', 'v', -55649, 1], ['Other', 'o', -107860, 1],
  ['سه ماهه اول فروردین ۱۳۹۸', 't', 164275, 1], ['11', 'v', 20820, 1], ['08', 'v', 4300], ['04', 'v', 1308, 1], ['01', 'v', 120], ['Other', 'o', 298, 1], ['02', 'v', -8988, 1],
  ['سه ماهه اول اردیبهشت ۱۳۹۸', 't', 182133, 1], ['02', 'v', 11225], ['08', 'v', 5690, 1], ['Other', 'o', -983, 1], ['04', 'v', -1200], ['01', 'v', -6413, 1], ['11', 'v', -15981],
  ['سه ماهه اول خرداد ۱۳۹۸', 't', 174471, 1], ['01', 'v', 900], ['Other', 'o', -300, 1], ['03', 'v', -100], ['08', 'v', -5174, 1], ['02', 'v', -6180], ['11', 'v', -101901, 1],
  ['سه ماهه دوم تیر ۱۳۹۸', 't', 61716, 1], ['01', 'v', 9000], ['03', 'v', 2115, 1], ['06', 'v', 400], ['Other', 'o', 0, 1], ['02', 'v', -201, 1], ['08', 'v', -2722],
  ['سه ماهه دوم مرداد ۱۳۹۸', 't', 70308, 1], ['04', 'v', 2900], ['01', 'v', 1769, 1], ['06', 'v', 60], ['Other', 'o', -46, 1], ['03', 'v', -80], ['08', 'v', -4545, 1]
];
const X = 162.7, STEP = 23.55, W = 18.6, ZERO = 755;
const y = v => ZERO - v * 0.00105;
let bars = '', lines = '', labels = '', axis = '';
for (let k = 0; k <= 5; k++) {
  lines += `<path stroke="#eeeeee" stroke-width="2" d="M154 ${y(k * 1e5)}H1156"/>`;
  axis += `<text class="t-y" x="141" y="${y(k * 1e5) + 4}">${fa(k * 1e5)}</text>`;
}
let level = 0;
rows.forEach(([name, kind, value, show], i) => {
  const x = X + i * STEP, from = kind === 't' ? 0 : level, to = from + value;
  const top = y(Math.max(from, to)), h = Math.abs(y(from) - y(to));
  const fill = kind === 't' ? '#01b8aa' : h < 1.1 ? '#a5a3a5' : kind === 'o' ? '#f2c80f' : value > 0 ? '#3cb44b' : '#e81123';
  bars += `<rect x="${x}" y="${top}" width="${W}" height="${Math.max(h, 1)}" fill="${fill}"/>`;
  if (i < rows.length - 1) bars += `<path stroke="#a09ea0" d="M${x} ${y(to)}H${x + STEP + W}"/>`;
  if (show) {
    const ly = value < 0 ? top + h + 28 : top - 9;
    const cx = i === 0 ? 179 : i === rows.length - 1 ? 1134 : x + W / 2;
    labels += `<text class="t-lab" x="${cx}" y="${ly}">${value < 0 ? '−' : ''}${fa(Math.abs(value))}</text>`;
  }
  const c = x + W / 2;
  if (kind === 't') labels += `<text class="t-p" transform="translate(${c + 3} 763) rotate(-90)">${name}</text>`;
  else if (kind === 'o') labels += `<text class="t-x" transform="translate(${c + 5} 763) rotate(-90)">${name}</text>`;
  else labels += `<text class="t-x" transform="translate(${c + 5} 763) rotate(-90)">Product_<tspan class="t-d">${name.replace(/\d/g, d => fa(d))}</tspan></text>`;
  level = to;
});
axis += '<text class="t-title" transform="translate(92 492) rotate(-90)">میزان فروش</text>';
document.getElementById('plot').innerHTML = lines + bars + axis + labels;

const row = (id, label, cls = '', lab = '', pre = '') =>
  `<div class="row ${cls}">${pre}<input type="checkbox" id="${id}"><label for="${id}" class="${lab}">${label}</label></div>`;
document.getElementById('act').innerHTML = row('a0', 'Select all') +
  ['ره', 'ـت', '۲', 'م', 'ها', 'ت', 'ره', 'از', 'م', 'ـر', 'ـی', 'ـر', 'ـن', 'ـت', 'ـی', 'ـی', 'ـی'].map((t, i) => row('a' + (i + 1), t, '', 'cut')).join('');
document.getElementById('prod').innerHTML = row('p0', 'Select all') +
  Array.from({ length: 12 }, (_, i) => row('p' + (i + 1), `Product_<span>${fa(i + 1).padStart(2, '۰')}</span>`)).join('');
document.getElementById('date').innerHTML = row('d0', 'Select All', '', '', '<i></i>') +
  Array.from({ length: 17 }, (_, i) => row('d' + (i + 1), 1385 + i, 'exp', '', '<i></i>')).join('');
document.getElementById('fieldlist').innerHTML =
  ['Date', 'PProduce', 'Produce', 'Produce2', 'Products', 'PSales', 'Sale&amp;Foroosh', 'Sales', 'Sales2'].map(t =>
    `<li class="${t === 'Date' || t === 'Sales' ? 'y' : ''}"><svg width="13" height="12" viewBox="0 0 13 12"><path fill="#c9c7c9" d="M0 0h13v3H0z"/><path fill="#fff" d="M0 3h13v9H0z"/><path stroke="#777" d="M0 3.500h13M0 6.500h13M0 9.500h13M4.500 3v9M8.500 3v9"/></svg>${t}</li>`).join('');
```
